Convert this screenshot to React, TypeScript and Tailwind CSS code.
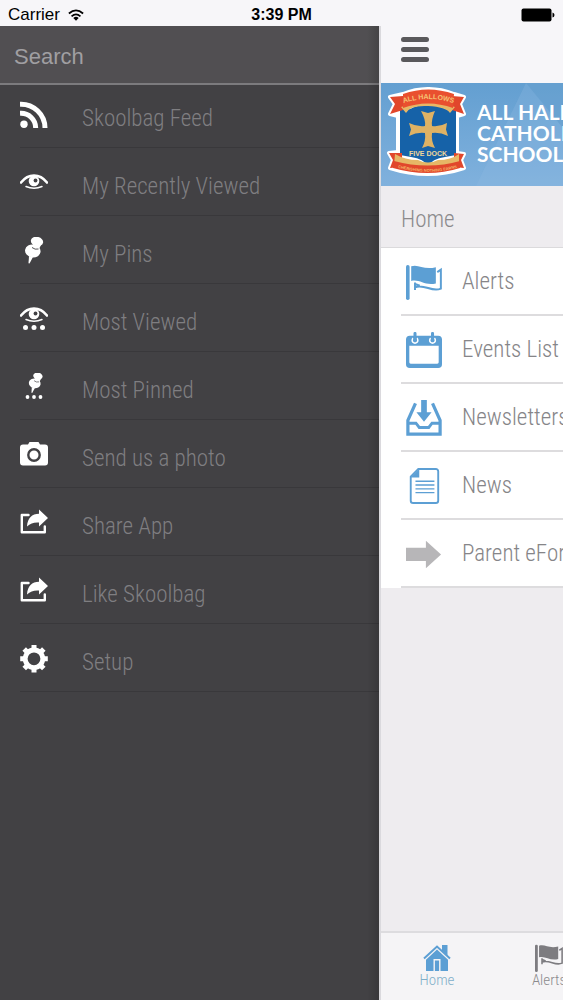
import type { ReactNode } from "react";

const EyeShape = () => (
  <>
    <path d="M1 11.500Q6.500 4.500 14 4.500T27 11.500" fill="none" stroke="currentColor" strokeWidth="2.600" strokeLinecap="round" />
    <circle cx="14" cy="10" r="5.300" fill="currentColor" />
    <circle cx="15.500" cy="9.500" r="1.900" fill="#424144" />
    <path d="M6 15.500Q14 19 22 15.500" fill="none" stroke="currentColor" strokeWidth="1.500" strokeLinecap="round" />
  </>
);

const PinShape = () => (
  <g fill="currentColor">
    <ellipse cx="17" cy="5.400" rx="6.200" ry="4.600" transform="rotate(12 17 5.400)" />
    <path d="M13 7l8 2-2.500 5-6-2z" />
    <ellipse cx="12.800" cy="15" rx="7.800" ry="6.400" transform="rotate(10 12.800 15)" />
    <path d="M9 20l4 1-3.500 6.500-1-.200z" />
    <path d="M12 11.500q3 2.500 6.500 1.500" fill="none" stroke="#424144" strokeWidth=".9" />
  </g>
);

const Dots = ({ y, gap, r }: { y: number; gap: number; r: number }) => (
  <g fill="currentColor">
    <circle cx={14 - gap} cy={y} r={r} />
    <circle cx="14" cy={y} r={r} />
    <circle cx={14 + gap} cy={y} r={r} />
  </g>
);

const SideIcon = ({ children }: { children: ReactNode }) => (
  <svg viewBox="0 0 28 28" className="size-7 shrink-0 text-white" aria-hidden="true">
    {children}
  </svg>
);

const RssIcon = () => (
  <SideIcon>
    <circle cx="4" cy="23.300" r="3.700" fill="currentColor" />
    <path d="M0 12.300A14.700 14.700 0 0 1 15.700 27M0 3.200A24 24 0 0 1 25 27" fill="none" stroke="currentColor" strokeWidth="5" />
  </SideIcon>
);

const EyeIcon = () => (
  <SideIcon>
    <g transform="translate(0 2)">
      <EyeShape />
    </g>
  </SideIcon>
);

const PinIcon = () => (
  <SideIcon>
    <g transform="translate(0 -1)">
      <PinShape />
    </g>
  </SideIcon>
);

const MostViewedIcon = () => (
  <SideIcon>
    <g transform="translate(0 -1)">
      <EyeShape />
    </g>
    <Dots y={22.5} gap={8.5} r={2.500} />
  </SideIcon>
);

const MostPinnedIcon = () => (
  <SideIcon>
    <g transform="translate(5 -1) scale(.76)">
      <PinShape />
    </g>
    <Dots y={24} gap={6.500} r={1.900} />
  </SideIcon>
);

const CameraIcon = () => (
  <SideIcon>
    <path d="M8 3.500L9.500 1h9L20 3.500h5A3 3 0 0 1 28 6.500v15a3 3 0 0 1-3 3H3a3 3 0 0 1-3-3v-15a3 3 0 0 1 3-3z" fill="currentColor" />
    <circle cx="14" cy="14" r="5.700" fill="none" stroke="#424144" strokeWidth="2.400" />
  </SideIcon>
);

const ShareIcon = () => (
  <SideIcon>
    <path d="M8.500 6H1.800v17.300h23V17.500" fill="none" stroke="currentColor" strokeWidth="2.400" strokeLinejoin="round" strokeLinecap="round" />
    <path d="M19 .5L28 9l-9 8.500v-4c-5-.300-8.500.500-12 4C7.500 9 12 4.700 19 4.700z" fill="currentColor" />
  </SideIcon>
);

const GearIcon = () => (
  <SideIcon>
    <g fill="none" stroke="currentColor" transform="translate(0 -.2)">
      <circle cx="14" cy="14" r="8.800" strokeWidth="4.800" />
      <path d="M14 .2v5M14 22.800v5M.2 14h5M22.800 14h5M4.200 4.200l3.400 3.400M20.400 20.400l3.400 3.400M4.200 23.800l3.400-3.400M20.400 7.600l3.400-3.400" strokeWidth="5" />
    </g>
  </SideIcon>
);

const FlagIcon = ({ className }: { className: string }) => (
  <svg viewBox="0 0 38 38" className={className} aria-hidden="true">
    <rect x="0" y="1" width="3.800" height="37" rx="1.800" fill="currentColor" />
    <path d="M5.500 2.500C13-.500 19 7 31.500 3.300V20.500C20 23.500 14 15.500 5.500 18z" fill="currentColor" />
    <path d="M33 8.500L36.800 6v20C27 30.500 20 20.500 9.500 24.500V19.500M9.500 27.500V21l5 2" fill="none" stroke="currentColor" strokeWidth="2.100" />
  </svg>
);

const CalendarIcon = () => (
  <svg viewBox="0 0 38 38" className="size-9 text-[#5c9fd4]" aria-hidden="true">
    <path fillRule="evenodd" d="M4 4h30a4 4 0 0 1 4 4v26a4 4 0 0 1-4 4H4a4 4 0 0 1-4-4V8a4 4 0 0 1 4-4zM3.500 14.500V32q0 1.500 1.500 1.500h28q1.500 0 1.500-1.500V14.500z" fill="currentColor" />
    <path d="M7.500 6.500a3 3 0 1 0 4 0M26 6.500a3 3 0 1 0 4 0" fill="none" stroke="#fff" strokeWidth="1.600" />
    <path d="M9.500 1.500v7M28 1.500v7" stroke="currentColor" strokeWidth="3.200" strokeLinecap="round" />
  </svg>
);

const InboxIcon = () => (
  <svg viewBox="0 0 38 38" className="size-9 text-[#5c9fd4]" aria-hidden="true">
    <path d="M16 0h6v13h5L19 23l-8-10h5z" fill="currentColor" />
    <path d="M10 3.500L2 21.500V36h34V21.500L28 3.500" fill="none" stroke="currentColor" strokeWidth="3.400" />
    <path d="M1.500 24.500h9l3.500 4.500h10l3.500-4.500h9" fill="none" stroke="currentColor" strokeWidth="3" />
  </svg>
);

const NewsIcon = () => (
  <svg viewBox="0 0 38 38" className="size-9 text-[#5c9fd4]" aria-hidden="true">
    <path d="M13 1h18.500a2.500 2.500 0 0 1 2.500 2.500v31a2.500 2.500 0 0 1-2.500 2.500h-24A2.500 2.500 0 0 1 5 34.500V9z" fill="none" stroke="currentColor" strokeWidth="2" />
    <path d="M14 1v9H5z" fill="currentColor" />
    <path d="M10 14h20M10 18h20M10 22h20M10 26h20" stroke="currentColor" strokeWidth="1.500" />
  </svg>
);

const ArrowIcon = () => (
  <svg viewBox="0 0 38 38" className="size-9 text-[#b7b6b8]" aria-hidden="true">
    <path d="M0 12.500h21V5l16 14.500L21 34v-7.500H0z" fill="currentColor" />
  </svg>
);

const HouseIcon = () => (
  <svg viewBox="0 0 28 28" className="size-7" aria-hidden="true">
    <path d="M19 1h5.500v11L19 6.500z" fill="currentColor" />
    <path d="M1 14.500L14 2.500l13 12" fill="none" stroke="currentColor" strokeWidth="2" />
    <path fillRule="evenodd" d="M14 5.500l11 10.200V27H3V15.700zM10.500 15h7v12h-1.400V16.500h-4.200V27h-1.400z" fill="currentColor" />
  </svg>
);

const Crest = () => (
  <svg viewBox="0 0 84 90" className="h-[90px] w-[84px] shrink-0" role="img" aria-label="All Hallows Five Dock crest">
    {/* White outline */}
    <path
      d="M18 7Q43-3 69 7L79 10 75 17 79 27 72 29V66L79 67 76 73 79 81Q43 93 5 81L8 73 4 66 13 65V29L5 27 10 17 5 10z"
      fill="#fff"
      stroke="#fff"
      strokeWidth="4"
      strokeLinejoin="round"
    />
    <path d="M15 19Q22 25 29 20Q43 15 58 20Q65 25 71 19V68L60 70Q47 72 43 79Q39 72 26 70L15 68z" fill="#1662a8" />
    {/* Top ribbon */}
    <path d="M5 10l13-1v14l-13 4 5-10zM79 10l-12-1v14l12 4-4-10z" fill="#e1472c" />
    <path d="M16 20Q43 12 70 20L65 26Q61 20 43 19T21 26z" fill="#e6b766" />
    <path d="M18 7Q43-2 69 7L68 21Q43 12 18 21z" fill="#e9502f" />
    {/* Bottom ribbon */}
    <path d="M4 66h13v14l-12 1 3-8zM79 67l-10-1v14l10 1-3-8z" fill="#e1472c" />
    <path d="M10 67Q20 73 33 73Q43 78 53 73Q66 73 74 67V79Q43 89 9 79z" fill="#e6b766" />
    <path d="M9 74Q43 83 75 74V81Q43 91 8 81z" fill="#e1472c" />
    <path d="M36 24L43 26 50 24Q46 33 47 39Q55 40 62 36L61 42.500 63 49Q55 45 47 46Q46 54 50 61L43 59 37 61Q41 54 40 46Q32 45 24 49L26 42.500 24 36Q32 40 40 39Q41 33 36 24z" fill="#dfb264" />
    <path id="crest-top" d="M16 17Q43 7 71 17" fill="none" />
    <path id="crest-bottom" d="M12 80.500Q43 89 73 80.500" fill="none" />
    <text className="font-['Liberation_Sans',sans-serif] text-[7px] font-bold" fill="#f5c274">
      <textPath href="#crest-top" startOffset="50%" textAnchor="middle">ALL HALLOWS</textPath>
    </text>
    <text x="43" y="68.500" textAnchor="middle" className="font-['Liberation_Sans',sans-serif] text-[7px] font-bold" fill="#f0d79a">
      FIVE DOCK
    </text>
    <text className="font-['Liberation_Sans',sans-serif] text-[4px] font-bold" fill="#f5b468">
      <textPath href="#crest-bottom" startOffset="50%" textAnchor="middle">CHERISHING NOTHING EARNS</textPath>
    </text>
  </svg>
);

const sideItems = [
  { label: "Skoolbag Feed", icon: <RssIcon /> },
  { label: "My Recently Viewed", icon: <EyeIcon /> },
  { label: "My Pins", icon: <PinIcon /> },
  { label: "Most Viewed", icon: <MostViewedIcon /> },
  { label: "Most Pinned", icon: <MostPinnedIcon /> },
  { label: "Send us a photo", icon: <CameraIcon /> },
  { label: "Share App", icon: <ShareIcon /> },
  { label: "Like Skoolbag", icon: <ShareIcon /> },
  { label: "Setup", icon: <GearIcon /> },
];

const homeItems = [
  { label: "Alerts", icon: <FlagIcon className="size-9 text-[#5c9fd4]" /> },
  { label: "Events List", icon: <CalendarIcon /> },
  { label: "Newsletters", icon: <InboxIcon /> },
  { label: "News", icon: <NewsIcon /> },
  { label: "Parent eForms", icon: <ArrowIcon /> },
];

const StatusBar = () => (
  <header className="grid h-[26px] grid-cols-3 items-center bg-[#f7f6f9] px-2 pt-1 font-['Liberation_Sans',sans-serif] text-base text-black">
    <div className="flex items-center gap-2">
      <span className="text-[17px] leading-[22px]">Carrier</span>
      <svg viewBox="0 0 18 13" className="h-3 w-4" aria-hidden="true">
        <g fill="none" stroke="#000" strokeWidth="2">
          <path d="M1 4.800Q9-2.200 17 4.800" />
          <path d="M4 8Q9 3.500 14 8" />
        </g>
        <path d="M6 10Q9 7.200 12 10L9 13z" />
      </svg>
    </div>
    <span className="text-center leading-[22px] font-bold">3:39 PM</span>
    <svg viewBox="0 0 34 14" className="h-3.5 w-[34px] justify-self-end" aria-hidden="true">
      <rect x=".5" y=".5" width="30" height="13" rx="2" />
      <path d="M31.500 4.500q2 .5 2 2.500t-2 2.500z" />
    </svg>
  </header>
);

const SideMenu = () => (
  <aside className="relative min-w-0 flex-1 bg-[#424144]">
    <div className="h-[59px] border-b-2 border-[#7c7b7e] bg-[#514f52]">
      <input
        type="text"
        aria-label="Search"
        placeholder="Search"
        className="size-full bg-transparent px-3.5 pt-1 font-['Liberation_Sans',sans-serif] text-[22px] text-white outline-none placeholder:text-[#a09fa2]"
      />
    </div>
    <nav aria-label="Menu">
      <ul className="pl-5">
        {sideItems.map((item) => (
          <li key={item.label} className="flex h-17 flex-col justify-end border-b border-[#39383b] first:h-[63px]">
            <a href="#" className="flex gap-[34px] pb-3.5">
              {item.icon}
              <span className="pt-1 text-[23px] leading-7 text-[#7f7e81]">{item.label}</span>
            </a>
          </li>
        ))}
      </ul>
    </nav>
    <div className="pointer-events-none absolute inset-y-0 right-0 w-3 bg-linear-to-r from-transparent to-black/15" />
  </aside>
);

const Banner = () => (
  <div className="relative flex h-[103px] items-start gap-2 overflow-hidden bg-linear-to-b from-[#639fd1] to-[#80b1dd] pt-1 pl-1">
    <svg viewBox="0 0 182 103" className="absolute inset-0 size-full" preserveAspectRatio="none" aria-hidden="true">
      <path d="M182 0H145L95 103h87z" fill="#8fbbe2" opacity=".3" />
      <path d="M145 0l37 45V0z" fill="#5795c9" opacity=".4" />
    </svg>
    <Crest />
    <h1 className="relative pt-[14px] font-['Lato',sans-serif] text-[21px] leading-[21px] font-bold whitespace-nowrap text-white">
      ALL HALLOWS
      <br />
      CATHOLIC
      <br />
      SCHOOL
    </h1>
  </div>
);

export default function App() {
  return (
    <div className="flex min-h-screen flex-col font-['Roboto_Condensed','Roboto',sans-serif] font-light">
      <StatusBar />
      <div className="flex flex-1">
        <SideMenu />

        {/* Page pushed to the right by the open menu */}
        <main className="flex w-46 shrink-0 flex-col overflow-hidden border-l-2 border-[#dad9dd] bg-[#eeecef]">
          <div className="h-[57px] bg-[#f7f6f9] px-5 py-2.5">
            <button type="button" aria-label="Close menu" className="flex w-7 flex-col gap-[5px] py-px">
              <span className="h-[5px] w-full rounded-sm bg-[#5a595c]" />
              <span className="h-[5px] w-full rounded-sm bg-[#5a595c]" />
              <span className="h-[5px] w-full rounded-sm bg-[#5a595c]" />
            </button>
          </div>
          <Banner />
          <h2 className="h-[62px] border-b border-[#dbdadc] px-5 pt-5 text-[23px] leading-7 text-[#8b8a8c]">Home</h2>
          <ul className="bg-white pl-5">
            {homeItems.map((item) => (
              <li key={item.label} className="h-17 border-b-2 border-[#dddcde]">
                <a href="#" className="flex h-full items-center gap-5 pt-0.5 pl-[5px] text-[23px] leading-7 whitespace-nowrap text-[#868588]">
                  <span className="shrink-0">{item.icon}</span>
                  {item.label}
                </a>
              </li>
            ))}
          </ul>
          <nav aria-label="Tabs" className="mt-auto flex h-[69px] border-t-2 border-[#dddcdf] bg-[#f5f4f6] text-[15px] leading-4">
            <a href="#" className="flex w-28 shrink-0 flex-col items-center pt-[11px] text-[#5c9fd4]">
              <HouseIcon />
              <span className="text-[#7fafc9]">Home</span>
            </a>
            <a href="#" className="flex w-28 shrink-0 flex-col items-center pt-[11px] text-[#7d7c80]">
              <FlagIcon className="size-7" />
              <span className="text-[#8b8a8d]">Alerts</span>
            </a>
          </nav>
        </main>
      </div>
    </div>
  );
}
